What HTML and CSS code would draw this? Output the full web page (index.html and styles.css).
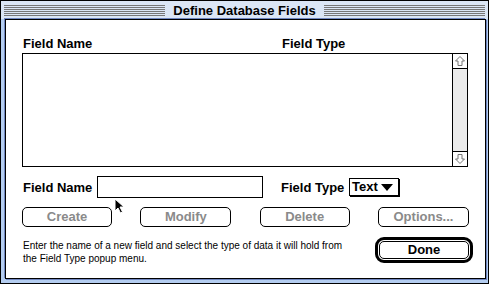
FILE: index.html
```html
<!DOCTYPE html>
<html lang="en">
<head>
  <meta charset="UTF-8" />
  <title>Define Database Fields</title>
  <link rel="stylesheet" href="styles.css">
</head>
<body>
  <div class="window">
    <div class="titlebar">
      <div class="stripes"></div>
      <div class="title">Define Database Fields</div>
      <div class="stripes"></div>
    </div>

    <div class="content">
      <div class="col-heads">
        <div class="head head-name">Field Name</div>
        <div class="head">Field Type</div>
      </div>

      <div class="list">
        <div class="list-body"></div>
        <div class="scrollbar">
          <div class="arrow arrow-up">
            <svg width="12" height="12" viewBox="0 0 12 12"><path d="M6 1.5 L10.5 6 L8 6 L8 10.5 L4 10.5 L4 6 L1.5 6 Z" fill="none" stroke="#777" stroke-width="1"/></svg>
          </div>
          <div class="track"></div>
          <div class="arrow arrow-down">
            <svg width="12" height="12" viewBox="0 0 12 12"><path d="M6 10.5 L10.5 6 L8 6 L8 1.5 L4 1.5 L4 6 L1.5 6 Z" fill="none" stroke="#777" stroke-width="1"/></svg>
          </div>
        </div>
      </div>

      <div class="entry-row">
        <div class="label label-name">Field Name</div>
        <div class="textbox"></div>
        <div class="label label-type">Field Type</div>
        <div class="popup">Text <span class="tri"></span></div>
      </div>

      <div class="button-row">
        <div class="btn disabled btn-create">Create</div>
        <div class="btn disabled btn-modify">Modify</div>
        <div class="btn disabled btn-delete">Delete</div>
        <div class="btn disabled btn-options">Options...</div>
      </div>

      <div class="bottom-row">
        <div class="help">Enter the name of a new field and select the type of data it will hold from<br>the Field Type popup menu.</div>
        <div class="default-ring"><div class="btn btn-done">Done</div></div>
      </div>
    </div>

    <svg class="cursor" width="12" height="17" viewBox="0 0 12 17">
      <path d="M1 1 L1 13 L4 10 L6.5 15 L8.5 14 L6 9 L10 9 Z" fill="#000" stroke="#fff" stroke-width="1"/>
    </svg>
  </div>
</body>
</html>
```

FILE: styles.css
```css
body {
  margin: 0;
  background: #fff;
  font-family: 'Liberation Sans', Arial, sans-serif;
}

.window {
  position: relative;
  width: 489px;
  height: 284px;
  box-sizing: border-box;
  border: 1px solid #000;
  background: #b4cdf0;
  display: flex;
  flex-direction: column;
  padding: 0 2px 4px 3px;
}

.titlebar {
  height: 18px;
  display: flex;
  align-items: center;
  background: #dbe6f5;
  margin: 0 -2px 0 -3px;
  padding: 0 3px 0 3px;
}

.stripes {
  flex: 1;
  height: 11px;
  background: repeating-linear-gradient(to bottom, #777 0 1px, transparent 1px 2px);
}

.title {
  font-weight: bold;
  font-size: 13px;
  padding: 0 8px;
  color: #000;
}

.content {
  flex: 1;
  background: #fff;
  border: 1px solid #000;
  box-shadow: -1px -1px 0 #6f86c0, 1px 1px 0 #6f86c0;
  padding: 14px 17px 0 16px;
  display: flex;
  flex-direction: column;
  margin-left: 1px;
}

.col-heads {
  display: flex;
  height: 19px;
  line-height: 19px;
}

.head {
  font-weight: bold;
  font-size: 13px;
}

.head-name {
  width: 259px;
  padding-left: 1px;
}

.list {
  height: 114px;
  box-sizing: border-box;
  border: 1px solid #000;
  display: flex;
}

.list-body {
  flex: 1;
}

.scrollbar {
  width: 14px;
  border-left: 1px solid #000;
  display: flex;
  flex-direction: column;
}

.arrow {
  height: 14px;
  display: flex;
  align-items: center;
  justify-content: center;
  background: #fff;
}

.arrow-up {
  border-bottom: 1px solid #000;
}

.arrow-down {
  border-top: 1px solid #000;
}

.track {
  flex: 1;
  background: #ebebeb;
}

.entry-row {
  display: flex;
  align-items: center;
  margin-top: 9px;
  height: 22px;
}

.label {
  font-weight: bold;
  font-size: 13px;
}

.label-name {
  width: 74px;
  padding-left: 1px;
}

.textbox {
  width: 166px;
  height: 22px;
  box-sizing: border-box;
  border: 1px solid #000;
}

.label-type {
  margin-left: 18px;
  width: 68px;
}

.popup {
  width: 50px;
  height: 18px;
  box-sizing: border-box;
  border: 1px solid #000;
  box-shadow: 1px 1px 0 #000;
  font-weight: bold;
  font-size: 13px;
  line-height: 16px;
  padding-left: 2px;
  display: flex;
  align-items: center;
  gap: 3px;
}

.tri {
  width: 0;
  height: 0;
  border-left: 6px solid transparent;
  border-right: 6px solid transparent;
  border-top: 7px solid #000;
}

.button-row {
  display: flex;
  justify-content: space-between;
  margin-top: 9px;
  width: 447px;
}

.btn {
  height: 20px;
  box-sizing: border-box;
  border: 1px solid #000;
  border-radius: 5px;
  font-weight: bold;
  font-size: 13px;
  line-height: 18px;
  text-align: center;
}

.btn-create, .btn-delete {
  width: 90px;
}

.btn-modify, .btn-options {
  width: 91px;
}

.disabled {
  color: #8a8a8a;
}

.bottom-row {
  display: flex;
  align-items: flex-start;
  margin-top: 10px;
  margin-right: -5px;
}

.help {
  flex: 1;
  font-size: 10px;
  line-height: 13px;
  padding: 2px 0 0 1px;
}

.default-ring {
  width: 98px;
  height: 26px;
  box-sizing: border-box;
  border: 3px solid #000;
  border-radius: 9px;
  padding: 1px;
}

.btn-done {
  height: 18px;
  line-height: 16px;
  border-radius: 5px;
}

.cursor {
  position: absolute;
  left: 113px;
  top: 197px;
}
```
